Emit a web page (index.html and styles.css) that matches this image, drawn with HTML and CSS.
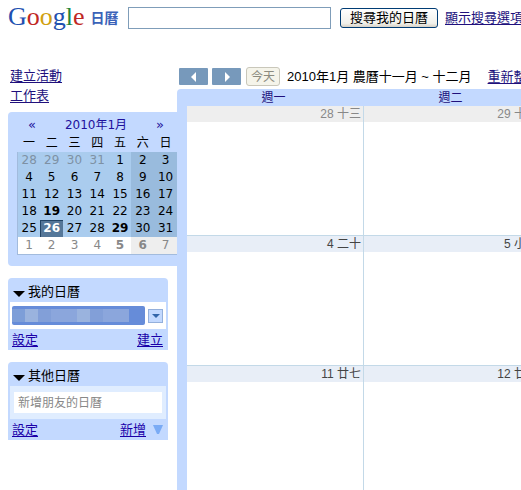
FILE: index.html
```
<!DOCTYPE html>
<html lang="zh-Hant">
<head>
  <meta charset="UTF-8" />
  <meta name="viewport" content="width=device-width, initial-scale=1.0" />
  <title>Google 日曆</title>
  <link rel="stylesheet" href="styles.css">
</head>
<body>
  <header class="header">
    <a class="logo" href="#"><span class="logo-name"><span class="blue">G</span><span class="red">o</span><span class="yellow">o</span><span class="blue">g</span><span class="green">l</span><span class="red">e</span></span><span class="logo-product">日曆</span></a>
    <form class="search">
      <input class="search-input" type="text" aria-label="搜尋我的日曆" />
      <button class="search-button" type="submit">搜尋我的日曆</button>
    </form>
    <a href="#">顯示搜尋選項</a>
  </header>

  <div class="layout">
    <aside class="sidebar">
      <nav class="links">
        <a href="#">建立活動</a>
        <a href="#">工作表</a>
      </nav>

      <section class="mini">
        <div class="mini-title">
          <button type="button" aria-label="上個月">«</button>
          <span>2010年1月</span>
          <button type="button" aria-label="下個月">»</button>
        </div>
        <table class="mini-table">
          <thead>
            <tr><th>一</th><th>二</th><th>三</th><th>四</th><th>五</th><th>六</th><th>日</th></tr>
          </thead>
          <tbody>
            <tr><td class="dim">28</td><td class="dim">29</td><td class="dim">30</td><td class="dim">31</td><td>1</td><td>2</td><td>3</td></tr>
            <tr><td>4</td><td>5</td><td>6</td><td>7</td><td>8</td><td>9</td><td>10</td></tr>
            <tr><td>11</td><td>12</td><td>13</td><td>14</td><td>15</td><td>16</td><td>17</td></tr>
            <tr><td>18</td><td class="busy">19</td><td>20</td><td>21</td><td>22</td><td>23</td><td>24</td></tr>
            <tr><td>25</td><td class="busy today">26</td><td>27</td><td>28</td><td class="busy">29</td><td>30</td><td>31</td></tr>
            <tr class="next"><td>1</td><td>2</td><td>3</td><td>4</td><td class="busy">5</td><td class="busy">6</td><td>7</td></tr>
          </tbody>
        </table>
      </section>

      <section class="panel">
        <h2><svg class="arrow" width="12" height="6" viewBox="0 0 12 6"><path d="M0 0h12L6 6z" fill="#000"/></svg>我的日曆</h2>
        <div class="panel-body my-list">
          <div class="my-calendar"><i class="c1"></i><i class="c2"></i><i class="c3"></i><i class="c4"></i><i class="c4"></i><i class="c2"></i><i class="c3"></i><i class="c4"></i><i class="c4"></i></div>
          <button class="menu-button" type="button" aria-label="選單"><svg width="8" height="4" viewBox="0 0 8 4"><path d="M0 0h8L4 4z" fill="#36a"/></svg></button>
        </div>
        <div class="panel-foot"><a href="#">設定</a><a href="#">建立</a></div>
      </section>

      <section class="panel">
        <h2><svg class="arrow" width="12" height="6" viewBox="0 0 12 6"><path d="M0 0h12L6 6z" fill="#000"/></svg>其他日曆</h2>
        <div class="panel-body friend">
          <input class="friend-input" type="text" placeholder="新增朋友的日曆" aria-label="新增朋友的日曆" />
        </div>
        <div class="panel-foot"><a href="#">設定</a><span class="add"><a href="#">新增</a><svg width="10" height="10" viewBox="0 0 10 10"><path d="M0 0h10L6 9H4z" fill="#7aabf5"/></svg></span></div>
      </section>
    </aside>

    <main class="main">
      <div class="toolbar">
        <button class="nav-button" type="button" aria-label="上一頁"><svg width="6" height="10" viewBox="0 0 6 10"><path d="M5 0v10L0 5z" fill="#fff"/></svg></button>
        <button class="nav-button" type="button" aria-label="下一頁"><svg width="6" height="10" viewBox="0 0 6 10"><path d="M1 0v10l5-5z" fill="#fff"/></svg></button>
        <button class="today-button" type="button" disabled>今天</button>
        <span class="range">2010年1月 農曆十一月 ~ 十二月</span>
        <a href="#">重新整理</a>
      </div>
      <div class="calendar">
        <table class="month">
          <thead>
            <tr><th>週一</th><th>週二</th></tr>
          </thead>
          <tbody>
            <tr class="past"><td><div class="date">28 十三</div></td><td><div class="date">29 十四</div></td></tr>
            <tr><td><div class="date">4 二十</div></td><td><div class="date">5 小寒</div></td></tr>
            <tr><td><div class="date">11 廿七</div></td><td><div class="date">12 廿八</div></td></tr>
          </tbody>
        </table>
      </div>
    </main>
  </div>
</body>
</html>
```
FILE: styles.css
```
* {
  box-sizing: border-box;
}
body {
  margin: 0;
  overflow: hidden;
  background: #fff;
  color: #000;
  font: 13px/18px "Liberation Sans", "Noto Sans CJK TC", sans-serif;
  white-space: nowrap;
}
a {
  color: #20107c;
  text-underline-offset: 2px;
}
button, input {
  margin: 0;
  padding: 0;
  font: inherit;
}
button {
  display: flex;
  align-items: center;
  justify-content: center;
}

/* header */
.header {
  display: flex;
  align-items: center;
  gap: 7px;
  height: 36px;
  padding-left: 8px;
}
.logo {
  display: flex;
  flex: none;
  align-items: center;
  gap: 6px;
  width: 113px;
  text-decoration: none;
}
.logo-name {
  padding-bottom: 2px;
  font: 26px/32px "Liberation Serif", serif;
}
.logo-product {
  color: #3a62b8;
  font-size: 14px;
  font-weight: bold;
}
.blue { color: #2250b0; }
.red { color: #c02824; }
.yellow { color: #d0a010; }
.green { color: #20863a; }
.search {
  display: flex;
  flex: none;
  align-items: center;
  gap: 9px;
}
.search-input {
  width: 203px;
  height: 22px;
  padding: 0 4px;
  border: 1px solid #7f9db9;
}
.search-button {
  width: 98px;
  height: 20px;
  border: 1px solid #003c74;
  border-radius: 3px;
  background: linear-gradient(#fff, #f0f0ea 80%, #d6d0c5);
  color: #000;
}

.layout {
  display: flex;
  align-items: flex-start;
  padding-top: 31px;
}

/* sidebar */
.sidebar {
  flex: none;
  width: 169px;
  margin-left: 8px;
}
.links {
  display: flex;
  flex-direction: column;
  align-items: flex-start;
  gap: 2px;
  margin-bottom: 7px;
  padding-left: 2px;
}
.mini {
  margin-bottom: 12px;
  padding: 4px 0 11px 9px;
  border-radius: 4px 0 0 4px;
  background: #c3d9ff;
}
.mini-title {
  display: flex;
  justify-content: space-between;
  padding: 0 13px 0 11px;
  color: #20109c;
  font-family: "DejaVu Sans", "Noto Sans CJK TC", sans-serif;
  font-size: 12px;
}
.mini-title button {
  border: 0;
  background: none;
  color: inherit;
  font-size: 13px;
}
.mini-table {
  width: 100%;
  border-collapse: collapse;
  table-layout: fixed;
  font: 12px/17px "DejaVu Sans", "Noto Sans CJK TC", sans-serif;
  text-align: center;
}
.mini-table th {
  height: 18px;
  padding: 1px 0 0;
  font-weight: normal;
}
.mini-table td {
  height: 17px;
  padding: 0;
  background: #aaccee;
}
.mini-table td:nth-child(n+6) {
  background: #99bbdd;
}
.mini-table tbody {
  border-left: 1px solid #a2bbdd;
  border-bottom: 1px solid #a2bbdd;
}
.mini-table .dim {
  color: #7e91a4;
}
.mini-table .busy {
  font-weight: bold;
}
.mini-table .today {
  background: #557799;
  box-shadow: inset 1px 1px #246;
  color: #fff;
}
.mini-table .next td {
  background: #fff;
  color: #888;
}
.mini-table .next td:nth-child(n+6) {
  background: #eee;
}

.panel {
  width: 160px;
  margin-bottom: 12px;
  border-radius: 4px 4px 0 0;
  background: #c3d9ff;
}
.panel h2 {
  display: flex;
  align-items: center;
  gap: 3px;
  height: 24px;
  margin: 0;
  padding: 3px 0 0 5px;
  font-size: 13px;
  font-weight: normal;
}
.arrow {
  margin-top: 4px;
}
.panel-body {
  display: flex;
  align-items: center;
  margin: 0 2px;
}
.my-list {
  justify-content: space-between;
  height: 27px;
  padding: 0 3px 0 2px;
  background: #fff;
}
.my-calendar {
  display: flex;
  width: 133px;
  height: 19px;
  padding: 3px 0;
  border-radius: 2px;
  background: #668cd9;
}
.my-calendar i {
  width: 13px;
}
.c1 { background: #7d9ed8; }
.c2 { background: #9ab3de; }
.c3 { background: #829fd8; }
.c4 { background: #8ba6dc; }
.menu-button {
  width: 15px;
  height: 14px;
  border: 1px solid #94b0dc;
  background: #c3d9ff;
}
.friend {
  height: 33px;
  padding: 0 4px;
  background: #e0edff;
}
.friend-input {
  width: 100%;
  height: 21px;
  padding: 0 4px;
  border: 0;
  background: #fff;
  font-size: 12px;
}
.friend-input::placeholder {
  color: #888;
  opacity: 1;
}
.panel-foot {
  display: flex;
  justify-content: space-between;
  padding: 2px 5px 1px 4px;
}
.panel-foot a {
  color: #1a00a8;
}
.add {
  display: flex;
  align-items: center;
  gap: 7px;
}

/* month view */
.main {
  flex: 1 0 auto;
}
.toolbar {
  display: flex;
  align-items: center;
  gap: 4px;
  height: 19px;
  margin-bottom: 3px;
  padding-left: 2px;
}
.nav-button {
  width: 29px;
  height: 17px;
  border: 0;
  border-radius: 1px;
  background: #7799bb;
}
.today-button {
  width: 34px;
  height: 19px;
  margin-left: 1px;
  border: 1px solid #c9c7ba;
  border-radius: 3px;
  background: #f5f4ea;
  color: #8b8b80;
  font-size: 12px;
}
.range {
  margin: 0 12px 0 3px;
}
.calendar {
  padding-left: 10px;
  border-radius: 4px 0 0 0;
  background: #c3d9ff;
}
.month {
  width: 100%;
  border-spacing: 0;
}
.month th {
  height: 17px;
  padding: 2px 4px 0 0;
  color: #20107c;
  font-size: 12px;
  font-weight: normal;
  line-height: 15px;
}
.month td {
  min-width: 177px;
  height: 130px;
  padding: 0;
  border-right: 1px solid #c3d9e8;
  border-bottom: 1px solid #c3d9e8;
  background: #fff;
  vertical-align: top;
}
.date {
  padding-right: 2px;
  background: #e8eef7;
  color: #444;
  font-size: 12px;
  line-height: 16px;
  text-align: right;
}
.past .date {
  background: #eee;
  color: #888;
}
```
